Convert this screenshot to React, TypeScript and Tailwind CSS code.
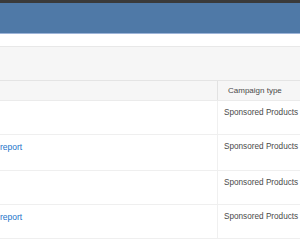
export default function App() {
  const rows = [
    { link: "", h: "h-[34px]" },
    { link: "report", h: "h-[36px]" },
    { link: "", h: "h-[34px]" },
    { link: "report", h: "h-[34px]" },
  ];
  return (
    <div className="w-[300px] h-[240px] overflow-hidden bg-white" style={{ fontFamily: '"Liberation Sans", Arial, sans-serif' }}>
      <div className="h-[3px] bg-[#3a3a3a]" />
      <div className="h-[30px] bg-[#4f79a7]" />
      <div className="h-[1px] bg-[#9db4d8]" />
      <div className="h-[13px] bg-white border-b border-[#e8e8e8]" />
      <div className="h-[34px] bg-[#f6f6f6] border-b border-[#e4e4e4]" />
      <div className="flex h-[20px] bg-[#f6f6f6] border-b border-[#ebebeb]">
        <div className="flex-1" />
        <div className="w-[83px] border-l border-[#e2e2e2] pl-[10px] flex items-center text-[8px] text-[#4a4a4a]">Campaign type</div>
      </div>
      {rows.map((r, i) => (
        <div key={i} className={`flex ${r.h} border-b border-[#efefef]`}>
          <div className="flex-1 pt-[6px] text-[8.5px] text-[#1a73c9]">{r.link}</div>
          <div className="w-[83px] border-l border-[#f0f0f0] pl-[6px] pt-[6px] text-[8.2px] text-[#4a4a4a] whitespace-nowrap">Sponsored Products</div>
        </div>
      ))}
    </div>
  );
}
